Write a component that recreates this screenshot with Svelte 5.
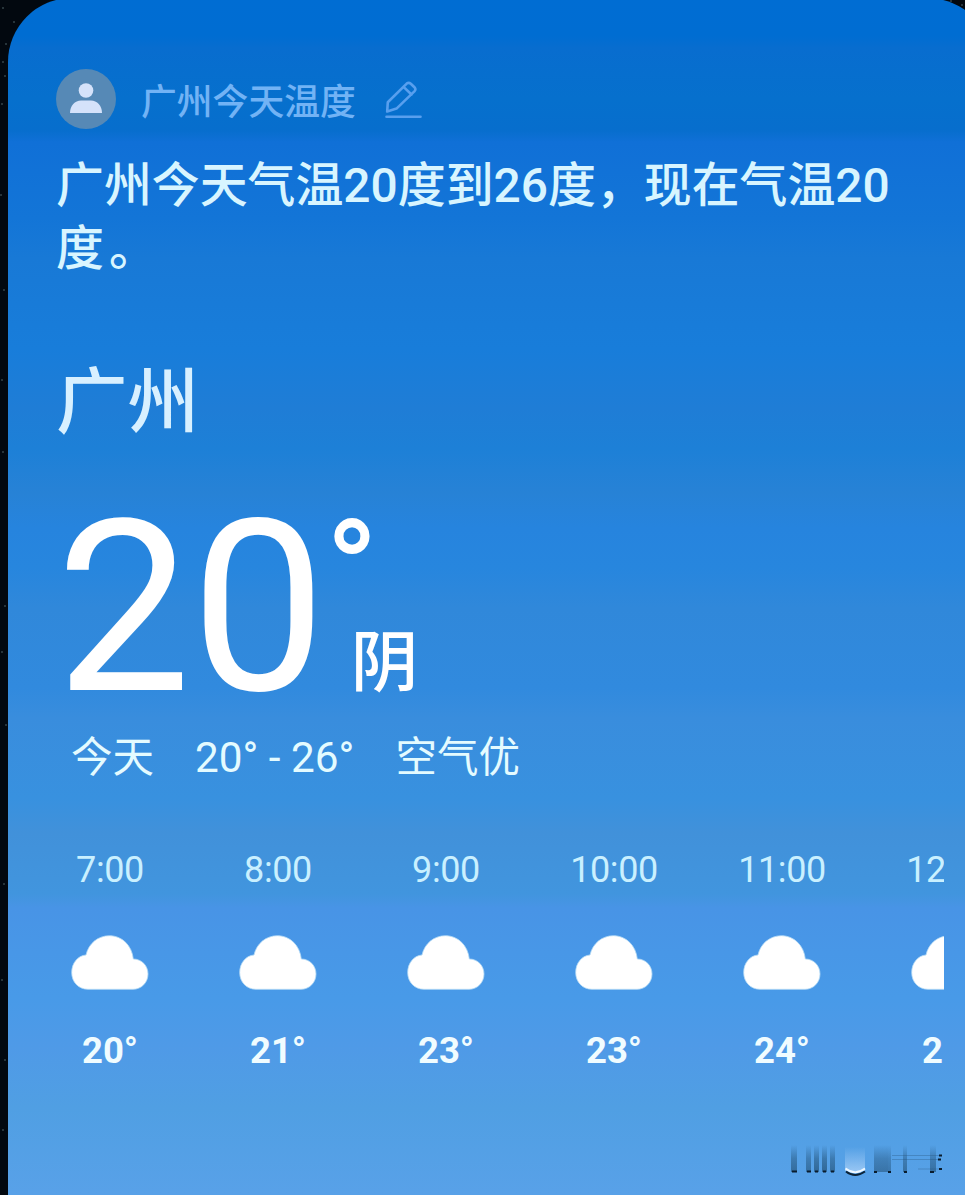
<script>
	const query = '广州今天温度';
	const answer = '广州今天气温20度到26度，现在气温20度';

	const hours = [
		{ time: '7:00', temp: 20 },
		{ time: '8:00', temp: 21 },
		{ time: '9:00', temp: 23 },
		{ time: '10:00', temp: 23 },
		{ time: '11:00', temp: 24 },
		{ time: '12:00', temp: 25 },
	];

	// faint specks on the dark strip behind the card
	const specks = [
		[3, 8], [14, 22], [6, 44], [3, 62], [5, 76], [2, 104], [1, 195], [4, 290], [2, 380],
		[3, 452], [5, 606], [2, 652], [6, 725], [4, 884], [2, 980], [5, 1060], [3, 1130],
		[951, 1], [962, 5],
	];

	// smeared stamp: x, width, opacity
	const bars = [
		[3, 6, 0.65], [18, 5, 0.6], [26, 5, 0.7], [34, 5, 0.7], [42, 5, 0.65],
		[86, 14, 0.55], [100, 3, 0.5], [115, 4, 0.6], [142, 6, 0.6],
	];
</script>

<main class="screen">
	<svg class="specks" width="965" height="1195" aria-hidden="true">
		{#each specks as [x, y]}
			<circle cx={x} cy={y} r="1" />
		{/each}
	</svg>

	<section class="card">
		<header class="query">
			<svg class="avatar" viewBox="0 0 60 60">
				<circle class="disc" cx="30" cy="30" r="30" />
				<circle cx="30" cy="21.5" r="7.3" />
				<path d="M14 44c0-7.500 5-12.500 11-12.500h10c6 0 11 5 11 12.500z" />
			</svg>
			<span>{query}</span>
			<svg class="edit" viewBox="0 0 38 38">
				<path d="M3.200 30.500 L3.800 21.200 L22.700 2.600 Q24.700 1 26.800 2.700 L30.700 6.500 Q32.200 8.400 30.400 10.400 L12.500 27.600 Z M19.500 5.900 L27.500 13.500" />
				<path d="M2.500 35.800H36.500" />
			</svg>
		</header>

		<p class="answer">{answer}<span class="stop">。</span></p>

		<h1>广州</h1>

		<div class="now">
			<span class="degrees">20</span>
			<div class="side">
				<span class="ring">°</span>
				<span class="state">阴</span>
			</div>
		</div>

		<div class="today">
			<span>今天</span>
			<span class="range">20° - 26°</span>
			<span>空气优</span>
		</div>

		<div class="hours">
			{#each hours as hour}
				<div class="hour">
					<span class="time">{hour.time}</span>
					<svg class="cloud" viewBox="0 0 78 55">
						<path d="M17 54.300C7.500 54.300 .7 47 .7 37.500C.7 28 7 20.500 15 20C17.500 8.500 27 .7 38.500 .7C51 .7 61 10.500 62.300 24C70.500 24 77 30.500 77 39C77 47.500 70.500 54.300 62 54.300Z" />
					</svg>
					<span class="temp">{hour.temp}°</span>
				</div>
			{/each}
		</div>
	</section>

	<svg class="stamp" viewBox="0 0 160 36" aria-hidden="true">
		<defs>
			<linearGradient id="smear" x1="0" y1="0" x2="0" y2="1">
				<stop offset="0" stop-color="#17405f" stop-opacity="0" />
				<stop offset="0.5" stop-color="#17405f" stop-opacity="0.6" />
				<stop offset="1" stop-color="#17405f" stop-opacity="0.85" />
			</linearGradient>
			<linearGradient id="shine" x1="0" y1="0" x2="0" y2="1">
				<stop offset="0" stop-color="#b9d9fa" stop-opacity="0" />
				<stop offset="1" stop-color="#b9d9fa" stop-opacity="0.65" />
			</linearGradient>
		</defs>
		{#each bars as [x, width, opacity]}
			<rect {x} y="4" {width} height="27" fill="url(#smear)" {opacity} />
		{/each}
		<rect x="57" y="6" width="20" height="24" fill="url(#shine)" />
		<path d="M58 30.500Q67 37.500 77 30.500" fill="none" stroke="#0c2438" stroke-width="2" />
		<path d="M57.500 27.500Q67 35 77 27.500" fill="none" stroke="#eef8ff" stroke-width="2" />
		<path d="M104 14.500H152M104 18.500H152M130 28H152" fill="none" stroke="#27567f" stroke-opacity="0.35" />
		<path d="M151 14.500h3M150 18.500h3M151 28h3M4 30.500h5M19 30.500h4M27 30.500h3M35 30.500h3M43 30.500h3M86 31h3M100 31h3M116 31h3M142 31h4" fill="none" stroke="#0a1d2e" stroke-width="2" />
	</svg>
</main>

<style>
	:global(body) {
		margin: 0;
		background: #02080f;
	}

	.screen {
		position: relative;
		display: flow-root;
		width: 965px;
		height: 1195px;
		overflow: hidden;
		background: #02080f;
		font-family: Roboto, 'Noto Sans CJK SC', sans-serif;
		color: #fff;
	}

	.specks {
		position: absolute;
		inset: 0;
		fill: #35434a;
	}

	.card {
		position: relative;
		box-sizing: border-box;
		width: 985px;
		height: 1260px;
		margin: -2px 0 0 8px;
		padding: 71px 0 0 48px;
		border-radius: 64px 66px 0 0;
		background: linear-gradient(
			#006dd3 0,
			#006dd2 38px,
			#086dcf 50px,
			#0670cd 100px,
			#076ecd 132px,
			#1070d7 144px,
			#1375d7 220px,
			#1879d6 260px,
			#187dda 350px,
			#1f7dd6 410px,
			#1d80d7 450px,
			#2782d6 495px,
			#2684de 530px,
			#2786de 570px,
			#3088da 610px,
			#318ade 690px,
			#398ddd 720px,
			#3891df 800px,
			#4191da 835px,
			#4195de 896px,
			#4894e6 910px,
			#489ae8 1000px,
			#4f9ae7 1050px,
			#509fe3 1110px,
			#58a1e8 1195px
		);
	}

	.query {
		display: flex;
		align-items: center;
		height: 60px;
		font-size: 35.8px;
		font-weight: 500;
		line-height: 60px;
		color: #72b3f5;

		& > span {
			margin-left: 25px;
			padding-top: 8px;
		}
	}

	.avatar {
		width: 60px;
		height: 60px;
		fill: #d5e2fa;

		& .disc {
			fill: #5689b6;
		}
	}

	.edit {
		width: 38px;
		height: 38px;
		margin: 2px 0 0 28px;
		fill: none;
		stroke: #589fee;
		stroke-width: 2.6;
		stroke-linejoin: round;
		stroke-linecap: round;
	}

	.answer {
		width: 850px;
		margin: 26px 0 0;
		font-size: 47.9px;
		font-weight: 500;
		line-height: 63px;
		color: #d8f5ff;
	}

	.stop {
		margin-left: 5px;
	}

	h1 {
		margin: 74px 0 0;
		font-size: 71.5px;
		font-weight: 500;
		line-height: 96px;
		color: #d8f0ff;
	}

	.now {
		display: flex;
		height: 220px;
		margin-top: 47px;
	}

	.degrees {
		font-size: 240px;
		line-height: 220px;
	}

	.side {
		display: flex;
		flex-direction: column;
	}

	.ring {
		height: 110px;
		font-size: 137px;
		font-weight: 500;
		line-height: 144px;
	}

	.state {
		margin-left: 25px;
		font-size: 67.5px;
		font-weight: 500;
		line-height: 110px;
	}

	.today {
		display: flex;
		gap: 41px;
		margin: 10px 0 0 15px;
		font-size: 41.5px;
		line-height: 60px;
		color: #e4fbff;
	}

	.range {
		font-size: 42.3px;
	}

	.hours {
		display: flex;
		width: 888px;
		margin-top: 57px;
		overflow: hidden;
	}

	.hour {
		display: flex;
		flex: 0 0 168px;
		flex-direction: column;
		align-items: center;
		margin-left: -30px;
		margin-right: 30px;
	}

	.time {
		font-size: 36px;
		line-height: 50px;
		letter-spacing: -0.4px;
		color: #c9f0ff;
	}

	.cloud {
		width: 78px;
		height: 55px;
		margin: 40px 0 36px;
		fill: #fff;
		stroke: #b7dcf5;
		stroke-width: 0.8;
	}

	.temp {
		font-size: 36.5px;
		font-weight: 700;
		line-height: 50px;
		color: #f0fcff;
	}

	.stamp {
		position: absolute;
		left: 788px;
		top: 1141px;
		width: 160px;
		height: 36px;
	}
</style>
